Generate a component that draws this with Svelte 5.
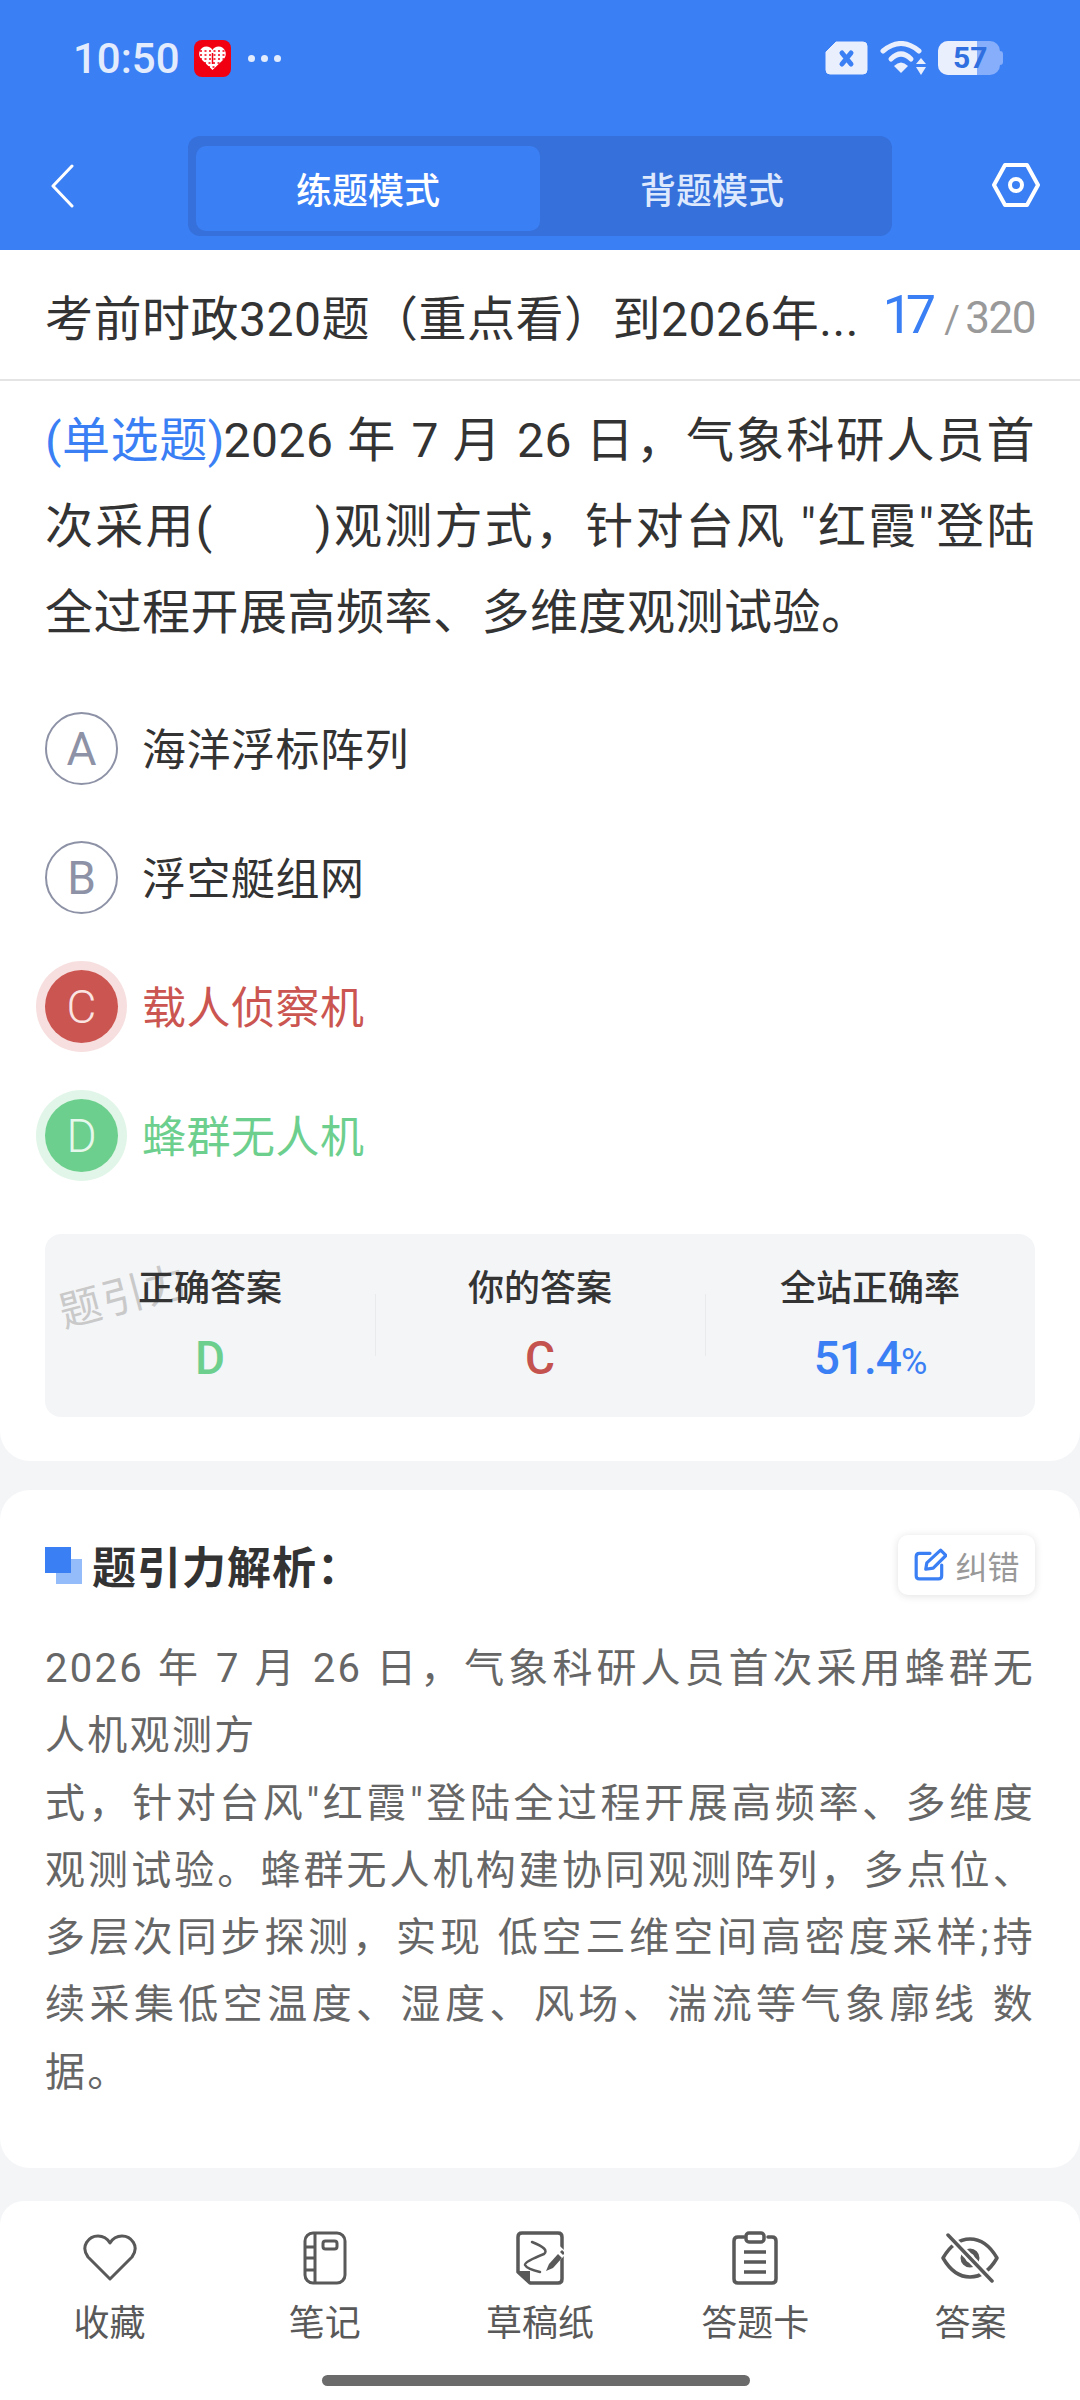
<script>
	const options = [
		{ key: 'A', text: '海洋浮标阵列', state: '' },
		{ key: 'B', text: '浮空艇组网', state: '' },
		{ key: 'C', text: '载人侦察机', state: 'wrong' },
		{ key: 'D', text: '蜂群无人机', state: 'right' }
	];
	const tabs = ['收藏', '笔记', '草稿纸', '答题卡', '答案'];
</script>

<div class="page">
	<header class="top">
		<div class="status">
			<span class="time">10:50</span>
			<svg class="app-badge" width="37" height="37" viewBox="0 0 37 37">
				<rect width="37" height="37" rx="8" fill="#f00010" />
				<path d="M18.5 30 L7 19 C3 14 6 6.500 12.500 6.500 C15 6.500 17.500 8 18.500 10 C19.500 8 22 6.500 24.500 6.500 C31 6.500 34 14 30 19 Z" fill="#fff" />
				<path d="M6 11H31M6 15H31M6 19H31M10 23H27M14 27H23" stroke="#f00010" stroke-width="1.500" stroke-dasharray="2 2.500" />
				<path d="M18.500 13V24" stroke="#f00010" stroke-width="1.500" />
			</svg>
			<span class="dots"><i></i><i></i><i></i></span>
			<span class="spacer"></span>
			<svg width="43" height="34" viewBox="0 0 43 34">
				<path d="M11 1H38Q42 1 42 5V29Q42 33 38 33H5Q1 33 1 29V11Z" fill="#e9effd" stroke="#e9effd" stroke-width="1" stroke-linejoin="round" />
				<path d="M17 12l9 11M26 12L17 23" stroke="#3b7ff5" stroke-width="5" stroke-linecap="round" />
			</svg>
			<svg class="wifi" width="48" height="34" viewBox="0 0 48 34">
				<path d="M3 10Q21 -5 39 10" fill="none" stroke="#e9effd" stroke-width="5" stroke-linecap="round" />
				<path d="M11 18Q21 8 31 18" fill="none" stroke="#e9effd" stroke-width="5" stroke-linecap="round" />
				<path d="M14 25Q21 18 28 25L21 32Z" fill="#e9effd" />
				<path d="M41 17l5 6H36ZM41 34l-5-8h10Z" fill="#e9effd" />
			</svg>
			<div class="battery">
				<div class="bat-fill"></div>
				<span class="bat-num">57</span>
			</div>
		</div>
		<div class="nav">
			<svg class="back" width="24" height="44" viewBox="0 0 24 44">
				<path d="M22 2L3 22l19 20" fill="none" stroke="#fff" stroke-width="3" stroke-linecap="round" stroke-linejoin="round" />
			</svg>
			<div class="segment">
				<div class="seg active">练题模式</div>
				<div class="seg">背题模式</div>
			</div>
			<svg class="gear" width="48" height="44" viewBox="0 0 48 44">
				<path d="M13 2H35L46 22 35 42H13L2 22Z" fill="none" stroke="#fff" stroke-width="4" stroke-linejoin="round" />
				<circle cx="24" cy="22" r="6" fill="none" stroke="#fff" stroke-width="4" />
			</svg>
		</div>
	</header>

	<div class="title-row">
		<span class="title">考前时政320题（重点看）到2026年...</span>
		<span class="count"><b>17</b><em>/</em>320</span>
	</div>

	<section class="question card">
		<p class="stem"><span class="kind">(单选题)</span>2026 年 7 月 26 日，气象科研人员首次采用(　　)观测方式，针对台风 "红霞"登陆全过程开展高频率、多维度观测试验。</p>
		<div class="options">
			{#each options as o}
				<div class="option {o.state}">
					<span class="bullet">{o.key}</span>
					<span class="opt-text">{o.text}</span>
				</div>
			{/each}
		</div>
		<div class="summary">
			<span class="watermark">题引力</span>
			<div class="cell"><span class="label">正确答案</span><span class="val green">D</span></div>
			<div class="cell"><span class="label">你的答案</span><span class="val red">C</span></div>
			<div class="cell"><span class="label">全站正确率</span><span class="val blue">51.4<small>%</small></span></div>
		</div>
	</section>

	<section class="analysis card">
		<div class="an-head">
			<svg width="37" height="37" viewBox="0 0 37 37">
				<rect x="11" y="12" width="26" height="25" fill="#94bcfb" />
				<rect width="26" height="26" fill="#3b7ff5" />
			</svg>
			<span class="an-title">题引力解析：</span>
			<span class="fix">
				<svg width="34" height="34" viewBox="0 0 32 32">
					<path d="M16 5H6Q3 5 3 8V26Q3 29 6 29H24Q27 29 27 26V16" fill="none" stroke="#3b7ff5" stroke-width="3" stroke-linecap="round" />
					<path d="M12 20l1-6L26 2l5 5L19 19Z" fill="none" stroke="#3b7ff5" stroke-width="3" stroke-linejoin="round" />
				</svg>
				纠错
			</span>
		</div>
		<p class="an-text">2026 年 7 月 26 日，气象科研人员首次采用蜂群无人机观测方<br />式，针对台风"红霞"登陆全过程开展高频率、多维度观测试验。蜂群无人机构建协同观测阵列，多点位、多层次同步探测，实现 低空三维空间高密度采样;持续采集低空温度、湿度、风场、湍流等气象廓线 数据。</p>
	</section>

	<div class="rest"></div>

	<footer class="tabbar">
		<div class="tabs">
			{#each tabs as t, i}
				<div class="tab">
					<div class="tab-icon">
						{#if i === 0}
							<svg width="54" height="48" viewBox="0 0 54 48"><path d="M27 45L5 23C-3 12 6 2 15 2 20 2 24 4 27 9 30 4 34 2 39 2 48 2 57 12 49 23Z" fill="none" stroke="#595959" stroke-width="3" stroke-linejoin="round" /></svg>
						{:else if i === 1}
							<svg width="44" height="54" viewBox="0 0 44 54"><rect x="2" y="2" width="40" height="50" rx="8" fill="none" stroke="#595959" stroke-width="3" /><path d="M12 2V52M2 16H12M2 27H12M2 39H12" stroke="#595959" stroke-width="3" fill="none" /><rect x="20" y="10" width="14" height="8" rx="2.500" fill="none" stroke="#595959" stroke-width="3" /></svg>
						{:else if i === 2}
							<svg width="48" height="54" viewBox="0 0 48 54"><path d="M6 2H42Q46 2 46 6V48Q46 52 42 52H14L2 41V6Q2 2 6 2Z" fill="none" stroke="#595959" stroke-width="3.500" stroke-linejoin="round" /><path d="M2 40H14V52Z" fill="#595959" /><path d="M16 11Q34 18 28 23 8 31 9 34 11 38 24 41" fill="none" stroke="#595959" stroke-width="2.500" stroke-linecap="round" stroke-linejoin="round" /><path d="M30 36L47 18" stroke="#fff" stroke-width="11" /><path d="M33 33L42 23l4 4-9 10-7 3Z" fill="#595959" /><path d="M44 21l2-2 3 3-2 2Z" fill="#595959" /></svg>
						{:else if i === 3}
							<svg width="46" height="54" viewBox="0 0 46 54"><path d="M12 6H6Q2 6 2 10V48Q2 52 6 52H40Q44 52 44 48V10Q44 6 40 6H36" fill="none" stroke="#595959" stroke-width="3.500" stroke-linecap="round" /><rect x="14" y="2" width="18" height="9" rx="3" fill="none" stroke="#595959" stroke-width="3.500" /><path d="M12 21H34M12 31H34M12 41H34" stroke="#595959" stroke-width="3.500" /></svg>
						{:else}
							<svg width="58" height="50" viewBox="0 0 58 50"><path d="M2 25Q13 6 29 6T56 25Q45 44 29 44T2 25Z" fill="none" stroke="#595959" stroke-width="3.500" stroke-linejoin="round" /><circle cx="29" cy="25" r="7" fill="none" stroke="#595959" stroke-width="5" /><path d="M7 2L51 48" stroke="#fff" stroke-width="8" /><path d="M7 2L51 48" stroke="#595959" stroke-width="3.500" stroke-linecap="round" /></svg>
						{/if}
					</div>
					<span class="tab-label">{t}</span>
				</div>
			{/each}
		</div>
		<div class="home-bar"></div>
	</footer>
</div>

<style>
	:global(body) {
		margin: 0;
		background: #f4f5f7;
	}

	.page {
		width: 1080px;
		height: 2400px;
		display: flex;
		flex-direction: column;
		overflow: hidden;
		font-family: "Roboto", "Noto Sans CJK SC", sans-serif;
		background: #f4f5f7;
		color: #333;
	}

	.top {
		height: 250px;
		background: #3b7ff5;
		flex-shrink: 0;
	}

	.status {
		height: 120px;
		display: flex;
		align-items: center;
		padding: 0 80px 4px 73px;
		box-sizing: border-box;
	}

	.time {
		font-size: 42px;
		font-weight: 500;
		color: #e3ecfd;
		width: 120px;
	}

	.app-badge {
		margin-left: 1px;
	}

	.dots {
		display: flex;
		gap: 6px;
		margin-left: 17px;
	}

	.dots i {
		width: 7px;
		height: 7px;
		border-radius: 50%;
		background: #e3ecfd;
	}

	.spacer {
		flex: 1;
	}

	.wifi {
		margin-left: 12px;
	}

	.battery {
		position: relative;
		width: 62px;
		height: 34px;
		margin-left: 10px;
		background: #86aefa;
		border-radius: 10px;
	}

	.battery::after {
		content: '';
		position: absolute;
		right: -3px;
		top: 10px;
		width: 3px;
		height: 14px;
		background: #86aefa;
		border-radius: 0 3px 3px 0;
	}

	.bat-fill {
		width: 39px;
		height: 100%;
		background: #e9effd;
		border-radius: 10px 0 0 10px;
	}

	.bat-num {
		position: absolute;
		left: 15px;
		top: 0;
		line-height: 34px;
		font-size: 30px;
		font-weight: 700;
		color: #2f6fe0;
	}

	.nav {
		height: 130px;
		display: flex;
		align-items: center;
		padding: 6px 40px 0 50px;
		box-sizing: border-box;
	}

	.back {
		margin-top: -5px;
	}

	.segment {
		width: 704px;
		height: 100px;
		margin-left: 114px;
		margin-top: -5px;
		padding: 10px 8px 5px;
		box-sizing: border-box;
		display: flex;
		background: #3570db;
		border-radius: 12px;
	}

	.seg {
		width: 344px;
		display: flex;
		align-items: center;
		justify-content: center;
		font-size: 36px;
		font-weight: 500;
		color: #dfe9fd;
		border-radius: 10px;
	}

	.seg.active {
		background: #3b7ff5;
		color: #fff;
	}

	.gear {
		margin-left: auto;
		margin-top: -6px;
	}

	.title-row {
		height: 131px;
		background: #fff;
		flex-shrink: 0;
		display: flex;
		align-items: center;
		justify-content: space-between;
		padding: 0 45px;
		box-sizing: border-box;
		border-bottom: 2px solid #e4e4e4;
	}

	.title {
		font-size: 48px;
		color: #333;
		letter-spacing: 0.5px;
	}

	.count {
		color: #999;
		font-size: 44px;
		letter-spacing: -1.5px;
		display: flex;
		align-items: baseline;
	}

	.count b {
		font-weight: 400;
		font-size: 54px;
		letter-spacing: -7px;
		color: #3b7ff5;
	}

	.count em {
		font-style: normal;
		font-size: 38px;
		margin: 0 7px 0 15px;
	}

	.card {
		background: #fff;
		border-radius: 0 0 30px 30px;
	}

	.question {
		height: 1080px;
		box-sizing: border-box;
		padding: 17px 45px 0;
		flex-shrink: 0;
		position: relative;
	}

	.stem {
		margin: 0;
		font-size: 48px;
		line-height: 86px;
		letter-spacing: 0.5px;
		color: #333;
		text-align: justify;
	}

	.kind {
		color: #3b7ff5;
		letter-spacing: -1px;
	}

	.options {
		display: flex;
		flex-direction: column;
		gap: 56px;
		margin-top: 56px;
	}

	.option {
		display: flex;
		align-items: center;
		gap: 24px;
		height: 73px;
		font-size: 44px;
		letter-spacing: 0.5px;
		color: #333;
	}

	.opt-text {
		margin-top: -4px;
	}

	.bullet {
		width: 73px;
		height: 73px;
		flex-shrink: 0;
		box-sizing: border-box;
		border: 2px solid #8e92a6;
		border-radius: 50%;
		display: flex;
		align-items: center;
		justify-content: center;
		color: #8e92a6;
		font-size: 46px;
		font-weight: 400;
		letter-spacing: 0;
	}

	.wrong {
		color: #cb5550;
	}

	.wrong .bullet {
		background: #cb5550;
		border: none;
		color: #fae4e2;
		font-weight: 300;
		box-shadow: 0 0 0 9px #f7dfdf;
	}

	.right {
		color: #6dcf8d;
	}

	.right .bullet {
		background: #6dcf8d;
		border: none;
		color: #e6f8ec;
		font-weight: 300;
		box-shadow: 0 0 0 9px #e1f6e8;
	}

	.summary {
		position: relative;
		height: 183px;
		margin-top: 62px;
		background: #f4f5f7;
		border-radius: 16px;
		display: flex;
		align-items: stretch;
	}

	.watermark {
		position: absolute;
		left: 12px;
		top: 28px;
		font-size: 42px;
		color: #c9c9c9;
		transform: rotate(-15deg);
		letter-spacing: 2px;
	}

	.cell {
		position: relative;
		flex: 1;
		display: flex;
		flex-direction: column;
		align-items: center;
		padding-top: 30px;
		gap: 17px;
	}

	.cell + .cell::before {
		content: '';
		position: absolute;
		left: 0;
		top: 60px;
		height: 62px;
		width: 1px;
		background: #e9eaec;
	}

	.label {
		font-size: 36px;
		font-weight: 500;
		color: #333;
		line-height: 50px;
	}

	.val {
		font-size: 46px;
		font-weight: 500;
		line-height: 54px;
	}

	.blue {
		color: #3b7ff5;
		letter-spacing: -1px;
	}

	.val small {
		font-size: 36px;
		font-weight: 400;
	}

	.green {
		color: #6dcf8d;
	}

	.red {
		color: #c4524e;
	}

	.analysis {
		margin-top: 29px;
		height: 678px;
		flex-shrink: 0;
		box-sizing: border-box;
		padding: 45px 45px 0;
		border-radius: 30px;
	}

	.an-head {
		display: flex;
		align-items: center;
		height: 60px;
	}

	.an-title {
		margin-left: 10px;
		font-size: 44px;
		font-weight: 700;
		color: #333;
		letter-spacing: 1px;
	}

	.fix {
		margin-left: auto;
		width: 137px;
		height: 60px;
		display: flex;
		align-items: center;
		justify-content: center;
		gap: 8px;
		font-size: 32px;
		color: #999;
		background: #fff;
		border-radius: 10px;
		box-shadow: 0 1px 8px rgba(0, 0, 0, 0.12);
	}

	.an-text {
		margin: 40px 0 0;
		font-size: 40px;
		line-height: 67.3px;
		letter-spacing: 2.3px;
		color: #666;
		text-align: justify;
	}

	.rest {
		height: 33px;
		flex-shrink: 0;
	}

	.tabbar {
		flex: 1;
		background: #fff;
		border-radius: 24px 24px 0 0;
		display: flex;
		flex-direction: column;
		min-height: 0;
	}

	.tabs {
		display: flex;
		padding: 0 2px;
		margin-top: 29px;
	}

	.tab {
		flex: 1;
		display: flex;
		flex-direction: column;
		align-items: center;
		color: #595959;
		font-size: 36px;
	}

	.tab-icon {
		height: 56px;
		display: flex;
		align-items: center;
		justify-content: center;
	}

	.tab-label {
		margin-top: 13px;
		line-height: 50px;
	}

	.home-bar {
		width: 428px;
		height: 11px;
		border-radius: 6px;
		background: #6b6b6b;
		margin: 26px 0 0 322px;
	}
</style>
